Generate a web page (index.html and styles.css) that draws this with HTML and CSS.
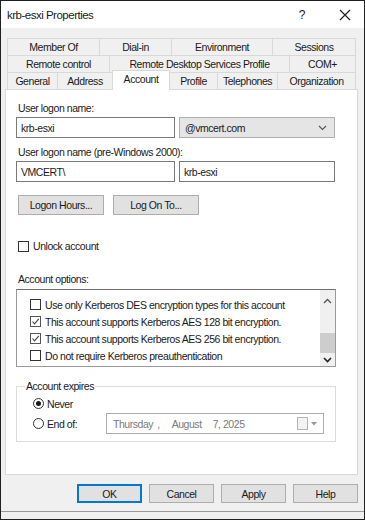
FILE: index.html
```html
<!DOCTYPE html>
<html lang="en">
<head>
    <meta charset="UTF-8">
    <meta name="viewport" content="width=device-width, initial-scale=1.0">
    <title>krb-esxi Properties</title>
    <link rel="stylesheet" href="styles.css">
</head>
<body>
    <div class="dialog">
        <div class="titlebar">
            <span class="title">krb-esxi Properties</span>
            <span class="help">?</span>
            <svg class="close" width="12" height="12" viewBox="0 0 12 12">
                <path d="M1 1 L11 11 M11 1 L1 11" stroke="#222" stroke-width="1.2" fill="none"/>
            </svg>
        </div>

        <div class="tabs">
            <div class="tab-row row1">
                <div class="tab">Member Of</div>
                <div class="tab">Dial-in</div>
                <div class="tab">Environment</div>
                <div class="tab">Sessions</div>
            </div>
            <div class="tab-row row2">
                <div class="tab">Remote control</div>
                <div class="tab">Remote Desktop Services Profile</div>
                <div class="tab">COM+</div>
            </div>
            <div class="tab-row row3">
                <div class="tab">General</div>
                <div class="tab">Address</div>
                <div class="tab active">Account</div>
                <div class="tab">Profile</div>
                <div class="tab">Telephones</div>
                <div class="tab">Organization</div>
            </div>
        </div>

        <div class="panel">
            <div class="label">User logon name:</div>
            <div class="field-row">
                <div class="textbox">krb-esxi</div>
                <div class="combo">
                    <span>@vmcert.com</span>
                    <svg width="9" height="6" viewBox="0 0 9 6"><path d="M1 1 L4.5 4.5 L8 1" stroke="#555" stroke-width="1.1" fill="none"/></svg>
                </div>
            </div>

            <div class="label label2">User logon name (pre-Windows 2000):</div>
            <div class="field-row">
                <div class="textbox">VMCERT\</div>
                <div class="textbox">krb-esxi</div>
            </div>

            <div class="btn-row">
                <button class="btn">Logon Hours...</button>
                <button class="btn">Log On To...</button>
            </div>

            <label class="check unlock"><span class="box"></span>Unlock account</label>

            <div class="label label3">Account options:</div>
            <div class="listbox">
                <ul class="options">
                    <li><span class="box"></span>Use only Kerberos DES encryption types for this account</li>
                    <li><span class="box checked"><svg width="9" height="9" viewBox="0 0 9 9"><path d="M1.5 4.5 L3.5 6.8 L7.8 1.8" stroke="#444" stroke-width="1.1" fill="none"/></svg></span>This account supports Kerberos AES 128 bit encryption.</li>
                    <li><span class="box checked"><svg width="9" height="9" viewBox="0 0 9 9"><path d="M1.5 4.5 L3.5 6.8 L7.8 1.8" stroke="#444" stroke-width="1.1" fill="none"/></svg></span>This account supports Kerberos AES 256 bit encryption.</li>
                    <li><span class="box"></span>Do not require Kerberos preauthentication</li>
                </ul>
                <div class="scrollbar">
                    <svg class="arrow" width="9" height="6" viewBox="0 0 9 6"><path d="M1 5 L4.5 1.5 L8 5" stroke="#555" stroke-width="1.3" fill="none"/></svg>
                    <div class="track"><div class="thumb"></div></div>
                    <svg class="arrow" width="9" height="6" viewBox="0 0 9 6"><path d="M1 1 L4.5 4.5 L8 1" stroke="#222" stroke-width="1.6" fill="none"/></svg>
                </div>
            </div>

            <fieldset class="group">
                <legend>Account expires</legend>
                <label class="radio"><span class="dot selected"></span>Never</label>
                <div class="end-row">
                    <label class="radio"><span class="dot"></span>End of:</label>
                    <div class="datepicker">
                        <span class="d-day">Thursday</span>
                        <span class="d-sep">,</span>
                        <span class="d-month">August</span>
                        <span class="d-date">7, 2025</span>
                        <span class="cal"></span>
                        <svg width="6" height="4" viewBox="0 0 6 4"><path d="M0 0 L6 0 L3 3.5 Z" fill="#999"/></svg>
                    </div>
                </div>
            </fieldset>
        </div>

        <div class="footer">
            <button class="btn btn-wide default">OK</button>
            <button class="btn btn-wide">Cancel</button>
            <button class="btn btn-wide">Apply</button>
            <button class="btn btn-wide">Help</button>
        </div>
    </div>
</body>
</html>
```

FILE: styles.css
```css
body {
    margin: 0;
    padding: 0;
    font-family: 'Liberation Sans', Arial, sans-serif;
    font-size: 10.5px;
    letter-spacing: -0.45px;
    color: #1a1a1a;
    background-color: #f0f0f0;
}
.dialog {
    width: 365px;
    height: 520px;
    box-sizing: border-box;
    border: 1px solid #202020;
    background-color: #f0f0f0;
    display: flex;
    flex-direction: column;
}
.titlebar {
    height: 27px;
    background-color: #ffffff;
    display: flex;
    align-items: center;
    padding: 0 13px 0 6px;
}
.title {
    font-size: 11.5px;
    letter-spacing: -0.5px;
    flex: 1;
}
.help {
    font-size: 12px;
    margin-right: 34px;
}
.tabs {
    margin-top: 10px;
    padding: 0 8px 0 6px;
}
.tab-row {
    display: grid;
    height: 17px;
}
.row1 { grid-template-columns: 93px 72px 101px 1fr; }
.row2 { grid-template-columns: 103px 180px 1fr; }
.row3 { grid-template-columns: 51px 55px 57px 48px 60px 1fr; }
.tab {
    border: 1px solid #d9d9d9;
    border-bottom: none;
    margin-left: -1px;
    display: flex;
    align-items: center;
    justify-content: center;
    background-color: #f0f0f0;
}
.tab:first-child {
    margin-left: 0;
}
.tab.active {
    background-color: #ffffff;
    margin-top: -2px;
    margin-bottom: -1px;
    position: relative;
    z-index: 1;
    align-items: flex-start;
    padding-top: 2px;
}
.panel {
    margin: 0 6px 0 4px;
    height: 386px;
    box-sizing: border-box;
    background-color: #ffffff;
    border: 1px solid #d9d9d9;
    padding: 11px 21px 0 10px;
}
.label {
    height: 14px;
    line-height: 14px;
    margin-left: 2px;
}
.label2 { margin-top: 7px; }
.label3 { margin-top: 19px; }
.field-row {
    display: grid;
    grid-template-columns: 159px 156px;
    gap: 4px;
    margin-top: 2px;
}
.textbox, .combo {
    height: 21px;
    box-sizing: border-box;
    border: 1px solid #7a7a7a;
    padding: 0 4px;
    display: flex;
    align-items: center;
    background-color: #ffffff;
}
.combo {
    background-color: #e5e5e5;
    border-color: #b0b0b0;
    justify-content: space-between;
    padding: 0 7px 0 5px;
}
.btn-row {
    display: flex;
    gap: 9px;
    margin-top: 13px;
    margin-left: 2px;
}
.btn {
    font-family: inherit;
    font-size: 10.5px;
    letter-spacing: -0.45px;
    color: #1a1a1a;
    background-color: #e1e1e1;
    border: 1px solid #adadad;
    height: 20px;
    width: 86px;
    padding: 0;
}
.check, .radio {
    display: flex;
    align-items: center;
}
.box {
    width: 11px;
    height: 11px;
    box-sizing: border-box;
    border: 1px solid #333333;
    background-color: #ffffff;
    margin-right: 4px;
    display: flex;
    align-items: center;
    justify-content: center;
}
.box.checked {
    border-color: #555555;
}
.unlock {
    margin-top: 24px;
    margin-left: 2px;
    height: 14px;
}
.listbox {
    margin-top: 3px;
    height: 78px;
    box-sizing: border-box;
    border: 1px solid #9a9a9a;
    border-top-color: #6e6e6e;
    display: flex;
}
.options {
    list-style-type: none;
    margin: 0;
    padding: 6px 0 0 13px;
    flex: 1;
}
.options li {
    height: 17px;
    display: flex;
    align-items: center;
}
.scrollbar {
    width: 15px;
    background-color: #f0f0f0;
    display: flex;
    flex-direction: column;
    align-items: center;
    padding: 8px 0 3px;
}
.track {
    flex: 1;
    width: 100%;
    display: flex;
    flex-direction: column;
    justify-content: flex-end;
    padding-bottom: 4px;
}
.thumb {
    height: 20px;
    background-color: #cdcdcd;
}
.group {
    margin: 13px 0 0 0;
    height: 62px;
    box-sizing: border-box;
    border: 1px solid #dcdcdc;
    padding: 4px 0 0 16px;
}
.group legend {
    padding: 0 1px;
    margin-left: -8px;
    line-height: 12px;
}
.dot {
    width: 11px;
    height: 11px;
    box-sizing: border-box;
    border: 1px solid #333333;
    border-radius: 50%;
    margin-right: 3px;
    display: flex;
    align-items: center;
    justify-content: center;
}
.dot.selected::after {
    content: '';
    width: 5px;
    height: 5px;
    border-radius: 50%;
    background-color: #1a1a1a;
}
.radio {
    height: 15px;
}
.end-row {
    display: flex;
    align-items: center;
    margin-top: 2px;
}
.end-row .radio {
    width: 73px;
}
.datepicker {
    width: 218px;
    height: 21px;
    box-sizing: border-box;
    border: 1px solid #acacac;
    display: flex;
    align-items: center;
    padding: 0 6px;
    color: #7a7a7a;
}
.d-sep { margin-left: 4px; }
.d-month { margin-left: 12px; }
.d-date { margin-left: 11px; flex: 1; }
.cal {
    width: 9px;
    height: 11px;
    border: 1px solid #b5b5b5;
    background-color: #f3f3f3;
    margin-right: 3px;
}
.footer {
    display: flex;
    justify-content: flex-end;
    gap: 7px;
    padding: 9px 6px 0 0;
    height: 27px;
    border-bottom: 1px solid #9a9a9a;
}
.btn-wide {
    width: 65px;
    height: 19px;
}
.btn.default {
    border: 1px solid #0078d7;
    box-shadow: inset 0 0 0 1px #0078d7;
}
```
